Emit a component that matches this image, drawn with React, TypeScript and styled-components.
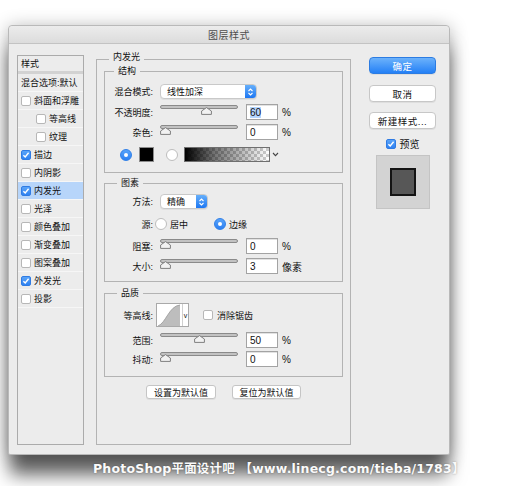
import React from 'react';
import styled, { createGlobalStyle } from 'styled-components';

const GlobalStyle = createGlobalStyle`
  html, body { margin: 0; padding: 0; background: #fff; }
  body {
    font-family: "Liberation Sans", "Noto Sans CJK SC", sans-serif;
    font-size: 9px;
    color: #111;
  }
  * { box-sizing: border-box; }
`;

const Page = styled.div`
  width: 517px;
  height: 486px;
  overflow: hidden;
  padding: 25px 0 0 8px;
  background: #fff;
`;

const Dialog = styled.div`
  width: 442px;
  height: 430px;
  background: #ececec;
  border: 1px solid #b9b9b9;
  border-radius: 4px 4px 2px 2px;
  box-shadow: 0 22px 18px -2px rgba(0, 0, 0, 0.6), 0 2px 18px rgba(0, 0, 0, 0.3);
  display: flex;
  flex-direction: column;
`;

const TitleBar = styled.div`
  height: 18px;
  flex: none;
  border-bottom: 1px solid #c3c3c3;
  border-radius: 4px 4px 0 0;
  background: linear-gradient(#ececec, #dcdcdc);
  display: flex;
  align-items: center;
  justify-content: center;
  font-size: 10px;
  color: #4d4d4d;
  letter-spacing: 0.5px;
`;

const Body = styled.div`
  display: flex;
  align-items: flex-start;
  padding: 11px 13px 9px 8px;
`;

/* ---------- left list ---------- */

const LayerList = styled.div`
  width: 67px;
  height: 390px;
  flex: none;
  border: 1px solid #ababab;
  background: #ececec;
`;

const ListHeader = styled.div`
  height: 15px;
  padding-left: 3px;
  display: flex;
  align-items: center;
`;

const ListDivider = styled.div`
  height: 3px;
  background: #d2d2d2;
`;

const LayerRow = styled.div<{ $indent?: boolean; $selected?: boolean }>`
  height: 18px;
  display: flex;
  align-items: center;
  gap: 3px;
  padding-left: ${p => (p.$indent ? 18 : 3)}px;
  border-bottom: 1px solid #f6f6f6;
  background: ${p => (p.$selected ? '#b7d5fa' : 'transparent')};
  white-space: nowrap;
`;

const Box = styled.span<{ $checked?: boolean }>`
  width: 10px;
  height: 10px;
  flex: none;
  border-radius: 2px;
  border: 1px solid ${p => (p.$checked ? '#2f7be3' : '#b7b7b7')};
  background: ${p => (p.$checked ? 'linear-gradient(#5aa4f8, #2f82f2)' : '#fff')};
  display: inline-flex;
  align-items: center;
  justify-content: center;
`;

const CheckBox = ({ checked }: { checked?: boolean }) => (
  <Box $checked={checked}>
    {checked && (
      <svg width="8" height="8" viewBox="0 0 8 8">
        <path d="M1.4 4.2 L3.2 6 L6.6 1.7" stroke="#fff" strokeWidth="1.4" fill="none" />
      </svg>
    )}
  </Box>
);

/* ---------- center groups ---------- */

const Group = styled.div<{ $pt: number; $pb: number; $px?: number; $mt?: number }>`
  position: relative;
  flex: none;
  border: 1px solid #b3b3b3;
  margin-top: ${p => p.$mt ?? 0}px;
  padding: ${p => p.$pt}px ${p => p.$px ?? 0}px ${p => p.$pb}px;
  display: flex;
  flex-direction: column;
`;

const Outer = styled(Group)`
  width: 255px;
  height: 386px;
  margin-left: 12px;
  margin-top: 4px;
`;

const Legend = styled.span<{ $left: number; $top: number }>`
  position: absolute;
  top: ${p => p.$top}px;
  left: ${p => p.$left}px;
  padding: 0 4px;
  line-height: 12px;
  background: #ececec;
`;

const FormRow = styled.div<{ $h: number; $mt?: number }>`
  display: flex;
  align-items: center;
  height: ${p => p.$h}px;
  margin-top: ${p => p.$mt ?? 0}px;
  white-space: nowrap;
`;

const Label = styled.span<{ $gap?: number }>`
  width: 48px;
  flex: none;
  text-align: right;
  margin-right: ${p => p.$gap ?? 7}px;
`;

const SelectBox = styled.div<{ $w: number }>`
  width: ${p => p.$w}px;
  height: 15px;
  flex: none;
  display: flex;
  border: 1px solid #c9c9c9;
  border-radius: 4px;
  background: #fff;
  box-shadow: 0 1px 0 rgba(0, 0, 0, 0.05);
  overflow: hidden;
`;

const SelectText = styled.span`
  flex: 1;
  padding-left: 6px;
  display: flex;
  align-items: center;
`;

const Stepper = styled.span`
  width: 11px;
  flex: none;
  background: linear-gradient(#66affa, #1d77f3);
  display: flex;
  align-items: center;
  justify-content: center;
`;

const Select = ({ w, value }: { w: number; value: string }) => (
  <SelectBox $w={w}>
    <SelectText>{value}</SelectText>
    <Stepper>
      <svg width="7" height="10" viewBox="0 0 7 10">
        <path d="M1.5 4 L3.5 2 L5.5 4 M1.5 6 L3.5 8 L5.5 6" stroke="#fff" strokeWidth="1.1" fill="none" />
      </svg>
    </Stepper>
  </SelectBox>
);

const SliderWrap = styled.div`
  position: relative;
  width: 78px;
  height: 16px;
  flex: none;
`;

const Track = styled.div`
  position: absolute;
  left: 0;
  right: 0;
  top: 1px;
  height: 4px;
  border-radius: 2px;
  border: 1px solid #8a8a8a;
  background: #c2c2c2;
`;

const Thumb = styled.svg<{ $pos: number }>`
  position: absolute;
  top: 3px;
  left: ${p => (p.$pos * 68) / 100}px;
`;

const Slider = ({ value }: { value: number }) => (
  <SliderWrap>
    <Track />
    <Thumb $pos={value} width="11" height="8" viewBox="0 0 11 8">
      <path d="M5.5 0.6 L10.4 4 L10.4 7.4 L0.6 7.4 L0.6 4 Z" fill="#f2f2f2" stroke="#7f7f7f" strokeWidth="1" />
    </Thumb>
  </SliderWrap>
);

const NumInput = styled.div`
  width: 32px;
  height: 16px;
  flex: none;
  margin-left: 8px;
  border: 1px solid #a3a3a3;
  box-shadow: inset 0 1px 0 #e2e2e2;
  background: #fff;
  padding-left: 3px;
  display: flex;
  align-items: center;
  font-size: 10px;
  color: #111;
`;

const Selected = styled.span`
  background: #b4d5fe;
`;

const Unit = styled.span`
  margin-left: 4px;
  font-size: 10px;
`;

const Radio = styled.span<{ $on?: boolean; $ml?: number }>`
  width: 12px;
  height: 12px;
  flex: none;
  margin-left: ${p => p.$ml ?? 0}px;
  border-radius: 50%;
  border: 1px solid ${p => (p.$on ? '#2f7fe8' : '#bdbdbd')};
  background: ${p => (p.$on ? 'linear-gradient(#58a3f9, #2c80f3)' : '#fff')};
  display: inline-flex;
  align-items: center;
  justify-content: center;
  &::after {
    content: '';
    width: 4px;
    height: 4px;
    border-radius: 50%;
    background: #fff;
    display: ${p => (p.$on ? 'block' : 'none')};
  }
`;

const Swatch = styled.span`
  width: 15px;
  height: 15px;
  flex: none;
  margin-left: 7px;
  background: #000;
  border: 1px solid #8c8c8c;
`;

const GradientSwatch = styled.span`
  width: 86px;
  height: 15px;
  flex: none;
  margin-left: 6px;
  border: 1px solid #6f6f6f;
  background:
    linear-gradient(to right, #000 0%, rgba(0, 0, 0, 0.55) 35%, rgba(0, 0, 0, 0) 100%),
    repeating-conic-gradient(#cdcdcd 0% 25%, #fff 0% 50%) 0 0 / 6px 6px;
`;

const Chevron = styled.span`
  width: 10px;
  height: 15px;
  flex: none;
  display: flex;
  align-items: center;
  justify-content: center;
`;

const RadioText = styled.span<{ $mr?: number }>`
  margin-left: 3px;
  margin-right: ${p => p.$mr ?? 0}px;
`;

const Contour = styled.span`
  display: flex;
  height: 24px;
  flex: none;
  border: 1px solid #a9a9a9;
  background: #fff;
`;

const ContourDrop = styled.span`
  width: 6px;
  border-left: 1px solid #d0d0d0;
  display: flex;
  align-items: center;
  justify-content: center;
  font-size: 7px;
`;

const Check = styled.span`
  display: inline-flex;
  align-items: center;
  gap: 4px;
  margin-left: 14px;
`;

const ButtonRow = styled.div`
  display: flex;
  justify-content: center;
  gap: 16px;
  margin-top: 8px;
`;

const SmallButton = styled.div<{ $w: number }>`
  width: ${p => p.$w}px;
  height: 14px;
  border: 1px solid #c5c5c5;
  border-radius: 3px;
  background: #fff;
  box-shadow: 0 1px 0 rgba(0, 0, 0, 0.06);
  display: flex;
  align-items: center;
  justify-content: center;
`;

/* ---------- right column ---------- */

const Side = styled.div`
  width: 67px;
  flex: none;
  margin-left: 18px;
  margin-top: 2px;
  display: flex;
  flex-direction: column;
  align-items: center;
`;

const Button = styled.div<{ $primary?: boolean; $mt?: number }>`
  width: 67px;
  height: 17px;
  margin-top: ${p => p.$mt ?? 0}px;
  border-radius: 4px;
  border: 1px solid ${p => (p.$primary ? '#2c7ce2' : '#c7c7c7')};
  background: ${p => (p.$primary ? 'linear-gradient(#6cb2fb, #2480f6)' : '#fff')};
  color: ${p => (p.$primary ? '#fff' : '#111')};
  box-shadow: 0 1px 0 rgba(0, 0, 0, 0.06);
  display: flex;
  align-items: center;
  justify-content: center;
  font-size: 9.5px;
  letter-spacing: 0.5px;
`;

const PreviewToggle = styled.div`
  display: flex;
  align-items: center;
  gap: 4px;
  height: 11px;
  margin-top: 9px;
  font-size: 10px;
`;

const PreviewBox = styled.div`
  width: 54px;
  height: 54px;
  margin-top: 6px;
  background: #d3d3d3;
  border: 1px solid #c4c4c4;
  display: flex;
  align-items: center;
  justify-content: center;
`;

const PreviewSquare = styled.div`
  width: 26px;
  height: 28px;
  background: #575757;
  border: 2px solid #141414;
`;

const Caption = styled.div`
  margin-top: 6px;
  padding-left: 85px;
  font-family: "DejaVu Sans", "Noto Sans CJK SC", sans-serif;
  font-weight: bold;
  font-size: 12.5px;
  line-height: 16px;
  color: #fafafa;
  letter-spacing: 0.2px;
  text-shadow: 0 0 2px rgba(0, 0, 0, 0.35);
  white-space: nowrap;
`;

const layers = [
  { label: '斜面和浮雕' },
  { label: '等高线', indent: true },
  { label: '纹理', indent: true },
  { label: '描边', checked: true },
  { label: '内阴影' },
  { label: '内发光', checked: true, selected: true },
  { label: '光泽' },
  { label: '颜色叠加' },
  { label: '渐变叠加' },
  { label: '图案叠加' },
  { label: '外发光', checked: true },
  { label: '投影' },
];

const App = () => (
  <>
    <GlobalStyle />
    <Page>
      <Dialog>
        <TitleBar>图层样式</TitleBar>
        <Body>
          <LayerList>
            <ListHeader>样式</ListHeader>
            <ListDivider />
            <LayerRow>混合选项:默认</LayerRow>
            {layers.map(l => (
              <LayerRow key={l.label} $indent={l.indent} $selected={l.selected}>
                <CheckBox checked={l.checked} />
                {l.label}
              </LayerRow>
            ))}
          </LayerList>

          <Outer $pt={11} $pb={0} $px={7}>
            <Legend $left={12} $top={-9}>内发光</Legend>

            <Group $pt={12} $pb={10}>
              <Legend $left={9} $top={-7}>结构</Legend>
              <FormRow $h={15}>
                <Label>混合模式:</Label>
                <Select w={97} value="线性加深" />
              </FormRow>
              <FormRow $h={16} $mt={5}>
                <Label>不透明度:</Label>
                <Slider value={60} />
                <NumInput><Selected>60</Selected></NumInput>
                <Unit>%</Unit>
              </FormRow>
              <FormRow $h={16} $mt={4}>
                <Label>杂色:</Label>
                <Slider value={0} />
                <NumInput>0</NumInput>
                <Unit>%</Unit>
              </FormRow>
              <FormRow $h={15} $mt={7}>
                <Radio $on $ml={15} />
                <Swatch />
                <Radio $ml={12} />
                <GradientSwatch />
                <Chevron>
                  <svg width="7" height="5" viewBox="0 0 7 5">
                    <path d="M1 1 L3.5 3.6 L6 1" stroke="#444" strokeWidth="1.1" fill="none" />
                  </svg>
                </Chevron>
              </FormRow>
            </Group>

            <Group $pt={10} $pb={7} $mt={10}>
              <Legend $left={12} $top={-7}>图素</Legend>
              <FormRow $h={15}>
                <Label>方法:</Label>
                <Select w={48} value="精确" />
              </FormRow>
              <FormRow $h={14} $mt={8}>
                <Label $gap={2}>源:</Label>
                <Radio />
                <RadioText $mr={26}>居中</RadioText>
                <Radio $on />
                <RadioText>边缘</RadioText>
              </FormRow>
              <FormRow $h={16} $mt={7}>
                <Label>阻塞:</Label>
                <Slider value={0} />
                <NumInput>0</NumInput>
                <Unit>%</Unit>
              </FormRow>
              <FormRow $h={16} $mt={4}>
                <Label>大小:</Label>
                <Slider value={0} />
                <NumInput>3</NumInput>
                <Unit>像素</Unit>
              </FormRow>
            </Group>

            <Group $pt={9} $pb={9} $mt={11}>
              <Legend $left={12} $top={-7}>品质</Legend>
              <FormRow $h={24}>
                <Label $gap={3}>等高线:</Label>
                <Contour>
                  <svg width="25" height="22" viewBox="0 0 25 22">
                    <path d="M1 22 C 9 19, 12 2, 23 1 L 23 22 Z" fill="#bdbdbd" />
                    <path d="M1 22 C 9 19, 12 2, 23 1" stroke="#9a9a9a" strokeWidth="0.8" fill="none" />
                  </svg>
                  <ContourDrop>v</ContourDrop>
                </Contour>
                <Check>
                  <CheckBox />
                  消除锯齿
                </Check>
              </FormRow>
              <FormRow $h={16} $mt={5}>
                <Label>范围:</Label>
                <Slider value={50} />
                <NumInput>50</NumInput>
                <Unit>%</Unit>
              </FormRow>
              <FormRow $h={16} $mt={3}>
                <Label>抖动:</Label>
                <Slider value={0} />
                <NumInput>0</NumInput>
                <Unit>%</Unit>
              </FormRow>
            </Group>

            <ButtonRow>
              <SmallButton $w={70}>设置为默认值</SmallButton>
              <SmallButton $w={69}>复位为默认值</SmallButton>
            </ButtonRow>
          </Outer>

          <Side>
            <Button $primary>确定</Button>
            <Button $mt={11}>取消</Button>
            <Button $mt={10}>新建样式...</Button>
            <PreviewToggle>
              <CheckBox checked />
              预览
            </PreviewToggle>
            <PreviewBox>
              <PreviewSquare />
            </PreviewBox>
          </Side>
        </Body>
      </Dialog>
      <Caption>PhotoShop平面设计吧 【www.linecg.com/tieba/1783】</Caption>
    </Page>
  </>
);

export default App;
